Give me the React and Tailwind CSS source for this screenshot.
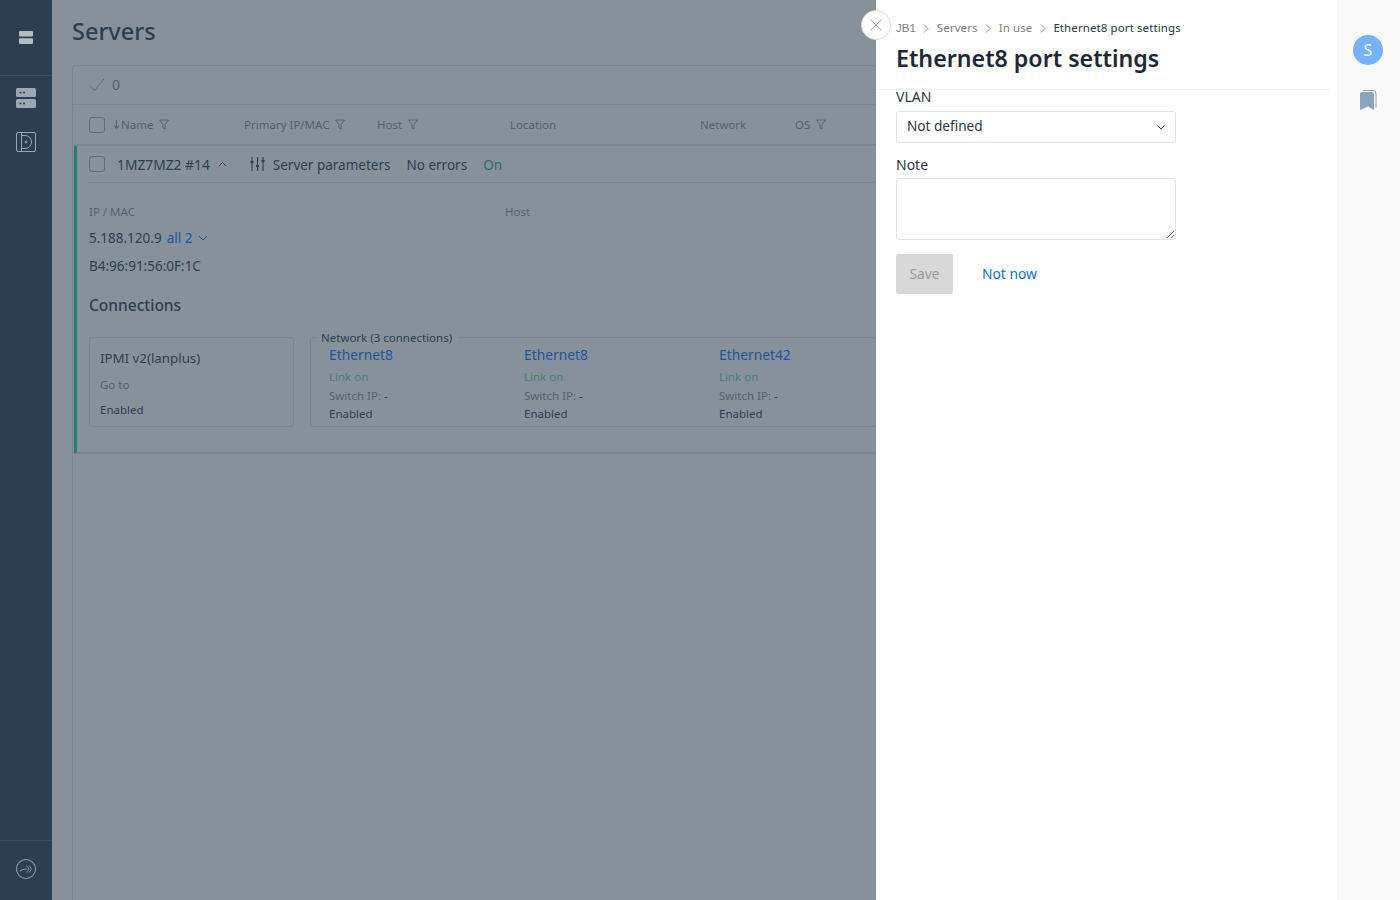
import React from 'react';

const Funnel = () => (
    <svg width="10" height="11" viewBox="0 0 10 11" fill="none" stroke="#858a92" strokeWidth="0.9" className="ml-[6px] shrink-0">
        <path d="M0.5 1h9L6 5.5V10L4 8.8V5.5z" />
    </svg>
);

const HeaderCell = ({ className, children, filter }) => (
    <div className={`flex items-center text-[11.5px] text-[#858a92] ${className}`}>
        {children}
        {filter && <Funnel />}
    </div>
);

const Checkbox = () => (
    <div className="w-[16px] h-[16px] rounded-[3px] border border-[#979ea6] shrink-0" />
);

const Port = ({ name }) => (
    <div className="w-[195px] shrink-0">
        <div className="text-[13.8px] leading-[18px] text-[#0f71eb]">{name}</div>
        <div className="mt-[4px] text-[11.5px] leading-[18px] text-[#6fd08a]">Link on</div>
        <div className="text-[11.5px] leading-[20px] text-[#858a92]">Switch IP: <span className="text-[#2c3e50]">-</span></div>
        <div className="text-[11.5px] leading-[16px] text-[#2c3e50]">Enabled</div>
    </div>
);

const Crumb = ({ children, className = '' }) => (
    <>
        <span className={`text-[#808080] ${className}`}>{children}</span>
        <svg width="6" height="9" viewBox="0 0 6 9" fill="none" stroke="#8a8a8a" strokeWidth="0.9" className="mx-[7.5px]">
            <path d="M1 0.5l4 4-4 4" />
        </svg>
    </>
);

export default function App() {
    return (
        <div className="flex h-[900px] w-[1400px] overflow-hidden bg-white font-['Noto_Sans','Open_Sans',sans-serif]">

            {/* SIDEBAR */}
            <aside className="w-[52px] shrink-0 bg-[#2c3e50] flex flex-col">
                <div className="h-[76px] flex items-center justify-center border-b border-[#3a4c5e]">
                    <svg width="14" height="13" viewBox="0 0 14 13" fill="#b3bcc5">
                        <rect width="14" height="5.5" rx="1" />
                        <rect y="7.2" width="14" height="5.8" rx="1" />
                    </svg>
                </div>
                <div className="flex justify-center mt-[12px]">
                    <svg width="20" height="20" viewBox="0 0 20 20">
                        <rect y="0" width="20" height="9" rx="1.5" fill="#9ba7b3" />
                        <rect y="11" width="20" height="9" rx="1.5" fill="#9ba7b3" />
                        <path d="M3.5 4.5h2M7 4.5h2M3.5 15.5h2M7 15.5h2" stroke="#2c3e50" strokeWidth="1.3" />
                    </svg>
                </div>
                <div className="flex justify-center mt-[24px]">
                    <svg width="20" height="20" viewBox="0 0 20 20" fill="none" stroke="#9ba7b3" strokeWidth="1">
                        <rect x="0.5" y="0.5" width="19" height="19" rx="1.5" />
                        <path d="M5.5 0.5v19" />
                        <path d="M5.5 3.5h3.5a6.5 6.5 0 0 1 0 13h-3.5" />
                        <circle cx="10" cy="10" r="1" />
                    </svg>
                </div>
                <div className="mt-auto h-[60px] pb-[4px] border-t border-[#3a4c5e] flex items-center justify-center">
                    <svg width="20" height="20" viewBox="0 0 20 20" fill="none" stroke="#8894a0" strokeWidth="1.1">
                        <circle cx="10" cy="10" r="9.5" />
                        <path d="M4 12.5c1-2 3.5-2.5 7-2.5" />
                        <path d="M10.5 6.5l2.5 3.5-2.5 3.5M13 6.5l2.5 3.5-2.5 3.5" strokeWidth="1" />
                    </svg>
                </div>
            </aside>

            {/* MAIN PAGE, dimmed by the overlay */}
            <main className="relative flex-1 min-w-0 overflow-hidden bg-[#f5f7f9] pl-[20px] pt-[15px] text-[#2c3e50]">
                <h1 className="text-[23.5px] leading-[32px] font-medium text-[#2c3e50]">Servers</h1>

                <div className="mt-[18px] w-[900px] h-[900px] border-l border-t border-[#d5dce2] rounded-tl-[4px]">
                    <div className="h-[39px] flex items-center pl-[16px] pb-[1px] border-b border-[#d5dce2]">
                        <svg width="16" height="14" viewBox="0 0 16 14" fill="none" stroke="#979ea6" strokeWidth="1">
                            <path d="M1 7.5l4.5 5L15 1" />
                        </svg>
                        <span className="ml-[7px] text-[14px] text-[#858a92]">0</span>
                    </div>

                    <div className="h-[41px] flex items-center pl-[16px] border-b-2 border-[#d5dce2]">
                        <Checkbox />
                        <HeaderCell filter className="ml-[8px] w-[131px]">
                            <svg width="7" height="9" viewBox="0 0 7 9" fill="none" stroke="#858a92" strokeWidth="1.1" className="mr-[1px]">
                                <path d="M3.5 0v8M1 5.5l2.5 2.8L6 5.5" />
                            </svg>
                            Name
                        </HeaderCell>
                        <HeaderCell filter className="w-[133px]">Primary IP/MAC</HeaderCell>
                        <HeaderCell filter className="w-[133px]">Host</HeaderCell>
                        <HeaderCell className="w-[190px]">Location</HeaderCell>
                        <HeaderCell className="w-[95px]">Network</HeaderCell>
                        <HeaderCell filter>OS</HeaderCell>
                    </div>

                    <div className="ml-[1px] h-[308px] border-l-[3px] border-b-2 border-l-[#20c988] border-b-[#d5dce2] pl-[12px]">
                        <div className="h-[37px] flex items-center border-b border-[#d5dce2] text-[13.5px]">
                            <Checkbox />
                            <span className="ml-[12px] pt-[2px] text-[13.8px] text-[#2c3e50]">1MZ7MZ2 #14</span>
                            <svg width="9" height="6" viewBox="0 0 9 6" fill="none" stroke="#2c3e50" strokeWidth="1" className="ml-[8px]">
                                <path d="M1 5l3.5-3.5L8 5" />
                            </svg>
                            <svg width="15" height="14" viewBox="0 0 15 14" fill="none" stroke="#2c3e50" strokeWidth="1.1" className="ml-[23px]">
                                <path d="M2 0v14M7.5 0v14M13 0v14" />
                                <path d="M0.5 5h3M6 9h3M11.5 4h3" strokeWidth="2" />
                            </svg>
                            <span className="ml-[8px] pt-[2px] text-[#2c3e50]">Server parameters</span>
                            <span className="ml-[16px] pt-[2px] text-[#2c3e50]">No errors</span>
                            <span className="ml-[16px] pt-[2px] text-[#1fad73]">On</span>
                        </div>

                        <div className="mt-[21px] flex text-[11.5px] leading-[16px] text-[#858a92]">
                            <span className="w-[416px]">IP / MAC</span>
                            <span>Host</span>
                        </div>
                        <div className="mt-[8px] flex items-center text-[13.5px] leading-[20px] text-[#2c3e50]">
                            5.188.120.9
                            <span className="ml-[5px] text-[#0f71eb]">all 2</span>
                            <svg width="10" height="6" viewBox="0 0 10 6" fill="none" stroke="#0f71eb" strokeWidth="1" className="ml-[6px]">
                                <path d="M1 1l4 4 4-4" />
                            </svg>
                        </div>
                        <div className="mt-[8px] text-[13.5px] leading-[20px] text-[#2c3e50]">B4:96:91:56:0F:1C</div>
                        <h2 className="mt-[18px] text-[15.5px] leading-[22px] font-medium text-[#2c3e50]">Connections</h2>

                        <div className="mt-[21px] flex gap-[16px]">
                            <div className="w-[205px] h-[90px] shrink-0 rounded-[3px] border border-[#d5dce2] pl-[10px] pt-[10px]">
                                <div className="text-[13.3px] leading-[20px] text-[#2c3e50]">IPMI v2(lanplus)</div>
                                <div className="mt-[9px] text-[11.5px] leading-[16px] text-[#858a92]">Go to</div>
                                <div className="mt-[9px] text-[11.5px] leading-[16px] text-[#2c3e50]">Enabled</div>
                            </div>
                            <div className="relative flex-1 h-[90px] rounded-[3px] border border-[#d5dce2] pl-[18px] pt-[8px] flex">
                                <div className="absolute -top-[8px] left-[4px] bg-[#f5f7f9] px-[6px] text-[11.5px] leading-[16px] text-[#2c3e50]">
                                    Network (3 connections)
                                </div>
                                <Port name="Ethernet8" />
                                <Port name="Ethernet8" />
                                <Port name="Ethernet42" />
                            </div>
                        </div>
                    </div>
                </div>

                <div className="absolute inset-0 bg-[#2c3e50]/55" />
            </main>

            {/* SETTINGS PANEL */}
            <section className="relative w-[461px] shrink-0 bg-white">
                <button className="absolute top-[10px] -left-[15px] w-[30px] h-[30px] rounded-full bg-white border border-[#dcdcdc] flex items-center justify-center">
                    <svg width="12" height="12" viewBox="0 0 12 12" stroke="#a0a0a0" strokeWidth="1">
                        <path d="M0.5 0.5l11 11M11.5 0.5l-11 11" />
                    </svg>
                </button>

                <div className="h-[90px] mr-[7px] border-b border-[#f2f2f2] pl-[20px] pt-[20px]">
                    <div className="flex items-center text-[11.5px] leading-[16px] tracking-[0.1px]">
                        <Crumb className="font-['Liberation_Sans',sans-serif] tracking-normal">JB1</Crumb>
                        <Crumb>Servers</Crumb>
                        <Crumb>In use</Crumb>
                        <span className="text-[#2b3640]">Ethernet8 port settings</span>
                    </div>
                    <h2 className="mt-[6px] text-[23.2px] leading-[32px] font-semibold text-[#1c2833]">Ethernet8 port settings</h2>
                </div>

                <div className="pl-[20px]">
                    <label className="block text-[14px] leading-[14px] text-[#2b3640]">VLAN</label>
                    <div className="mt-[7px] w-[280px] h-[32px] rounded-[3px] border border-[#e3e3e3] flex items-center justify-between px-[10px] text-[13.6px] text-[#2b3640]">
                        <span className="mb-[2px]">Not defined</span>
                        <svg width="8" height="5" viewBox="0 0 8 5" fill="none" stroke="#444" strokeWidth="1">
                            <path d="M0.5 0.5L4 4l3.5-3.5" />
                        </svg>
                    </div>

                    <label className="block mt-[15px] text-[14px] leading-[14px] text-[#2b3640]">Note</label>
                    <textarea className="block mt-[6px] w-[280px] h-[62px] rounded-[3px] border border-[#e3e3e3] bg-white" />

                    <div className="mt-[14px] flex items-center">
                        <button className="w-[57px] h-[40px] rounded-[2px] bg-[#d8d8d8] text-[13.8px] text-[#9a9a9a]">Save</button>
                        <a className="ml-[29px] text-[13.8px] text-[#0b6fe0]">Not now</a>
                    </div>
                </div>
            </section>

            {/* RIGHT RAIL */}
            <aside className="w-[63px] shrink-0 bg-[#f9f9f9] flex flex-col items-center pt-[35px] pr-[1px]">
                <div className="w-[30px] h-[30px] rounded-full bg-[#73b3ff] flex items-center justify-center text-[16px] text-white">S</div>
                <svg width="18" height="20" viewBox="0 0 18 20" className="mt-[25px]">
                    <path d="M4 0.5h10a3 3 0 0 1 3 3v14" fill="none" stroke="#8aa5bf" strokeWidth="1" />
                    <path d="M3 2h9a3 3 0 0 1 3 3v15l-6-3.5L1 20V4a2 2 0 0 1 2-2z" fill="#8aa5bf" />
                </svg>
            </aside>
        </div>
    );
}
